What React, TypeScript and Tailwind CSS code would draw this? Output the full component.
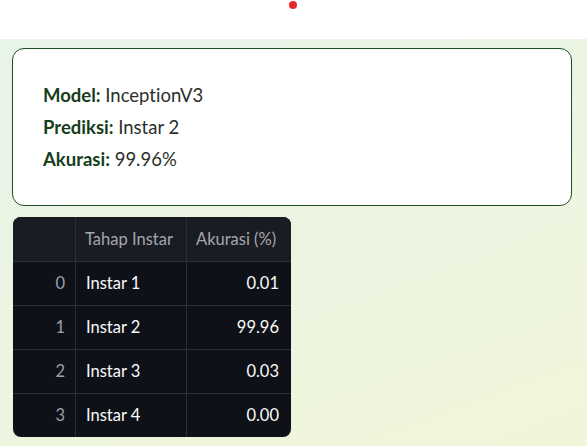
import React from "react";

const rows = [
  { i: 0, name: "Instar 1", acc: "0.01" },
  { i: 1, name: "Instar 2", acc: "99.96" },
  { i: 2, name: "Instar 3", acc: "0.03" },
  { i: 3, name: "Instar 4", acc: "0.00" },
];

export default function App() {
  return (
    <div className="w-[587px] h-[446px] overflow-hidden flex flex-col [font-variant-ligatures:none]" style={{ fontFamily: "Lato, 'Noto Sans', sans-serif" }}>
      <div className="h-[39px] bg-white flex justify-center">
        <div className="w-[8px] h-[8px] rounded-full bg-[#e8262b] mt-[1px] ml-[-2px]" />
      </div>
      <div className="flex-1 bg-[linear-gradient(160deg,#e7f4e8_0%,#eef5e0_60%,#f1f6da_100%)] px-[12px] pt-[9px] flex flex-col items-start">
        <div className="w-[560px] h-[158px] bg-white border border-[#1f4d25] rounded-[12px] pl-[30px] pt-[35px] flex flex-col gap-[9.5px] text-[18.5px] leading-[22.5px] text-[#2b2f2b]">
          <div><span className="font-bold text-[#173d1c]">Model:</span> InceptionV3</div>
          <div><span className="font-bold text-[#173d1c]">Prediksi:</span> Instar 2</div>
          <div><span className="font-bold text-[#173d1c]">Akurasi:</span> 99.96%</div>
        </div>
        <div className="mt-[11px] ml-[1px] w-[278px] rounded-[8px] overflow-hidden bg-[#0e1117] text-[16.5px]">
          <div className="grid grid-cols-[63px_111px_104px] h-[44px] bg-[#1a1c24] text-[#a3a6ad]">
            <div className="border-r border-[#2c2f37]" />
            <div className="border-r border-[#2c2f37] flex items-center pl-[9px]">Tahap Instar</div>
            <div className="flex items-center pl-[9px]">Akurasi (%)</div>
          </div>
          {rows.map((r) => (
            <div key={r.i} className="grid grid-cols-[63px_111px_104px] h-[44px] border-t border-[#2c2f37] text-[#fafafa]">
              <div className="border-r border-[#2c2f37] flex items-center justify-end pr-[10px] text-[#9da0a7]">{r.i}</div>
              <div className="border-r border-[#2c2f37] flex items-center pl-[10px]">{r.name}</div>
              <div className="flex items-center justify-end pr-[12px]">{r.acc}</div>
            </div>
          ))}
        </div>
      </div>
    </div>
  );
}
